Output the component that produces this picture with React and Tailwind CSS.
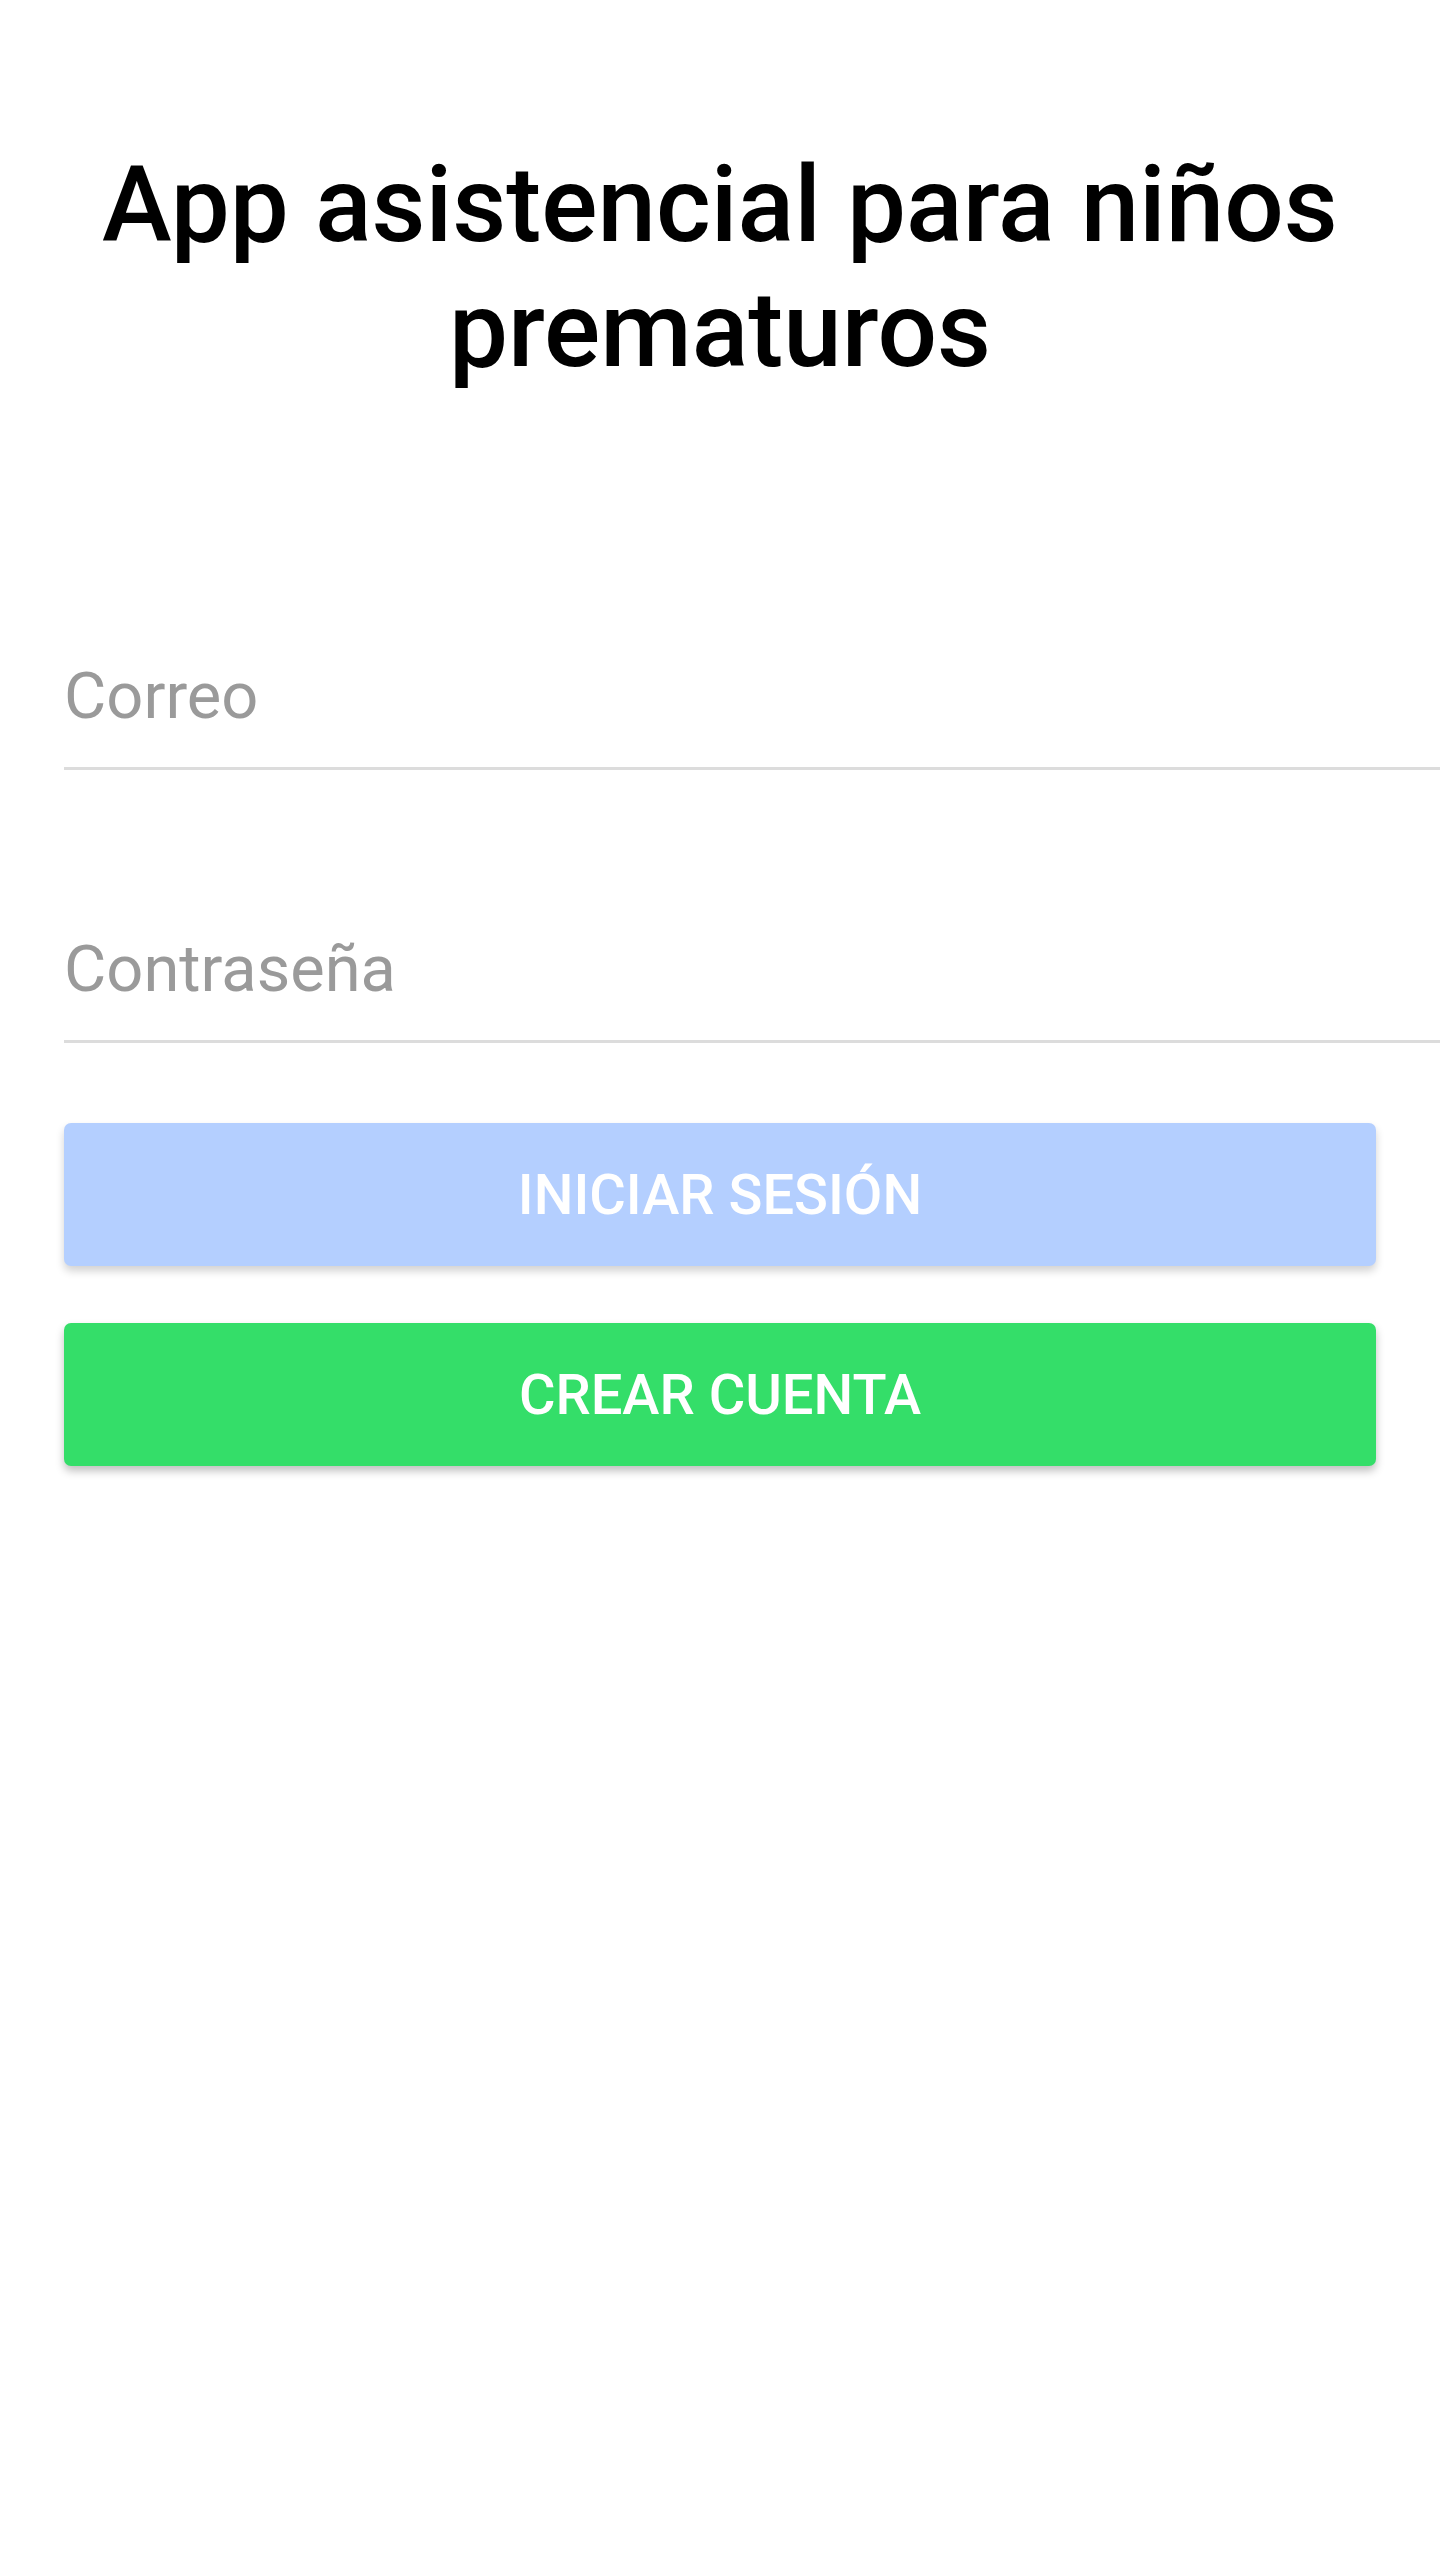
import React from "react";

export default function App() {
  return (
    <div className="min-h-[2560px] w-[1440px] bg-white" style={{ fontFamily: "Roboto, 'Noto Sans', sans-serif" }}>
      <div className="pt-[143px] px-[64px]">
        <h1 className="text-center text-[105px] leading-[125px] font-medium text-black">
          App asistencial para niños prematuros
        </h1>
      </div>
      <div className="mt-[266px] ml-[64px] border-b-[3px] border-[#dcdcdc] pb-[33px]">
        <div className="text-[65px] leading-[75px] text-[#9a9a9a]">Correo</div>
      </div>
      <div className="mt-[162px] ml-[64px] border-b-[3px] border-[#dcdcdc] pb-[33px]">
        <div className="text-[65px] leading-[75px] text-[#9a9a9a]">Contraseña</div>
      </div>
      <div className="mx-[64px] mt-[80px] flex flex-col gap-[57px]">
        <div className="h-[143px] rounded-[7px] bg-[#b4cfff] flex items-center justify-center shadow-[0_5px_8px_rgba(0,0,0,0.18)]">
          <span className="text-[56px] font-medium text-white">INICIAR SESIÓN</span>
        </div>
        <div className="h-[143px] rounded-[7px] bg-[#34de69] flex items-center justify-center shadow-[0_5px_8px_rgba(0,0,0,0.25)]">
          <span className="text-[56px] font-medium text-white">CREAR CUENTA</span>
        </div>
      </div>
    </div>
  );
}
